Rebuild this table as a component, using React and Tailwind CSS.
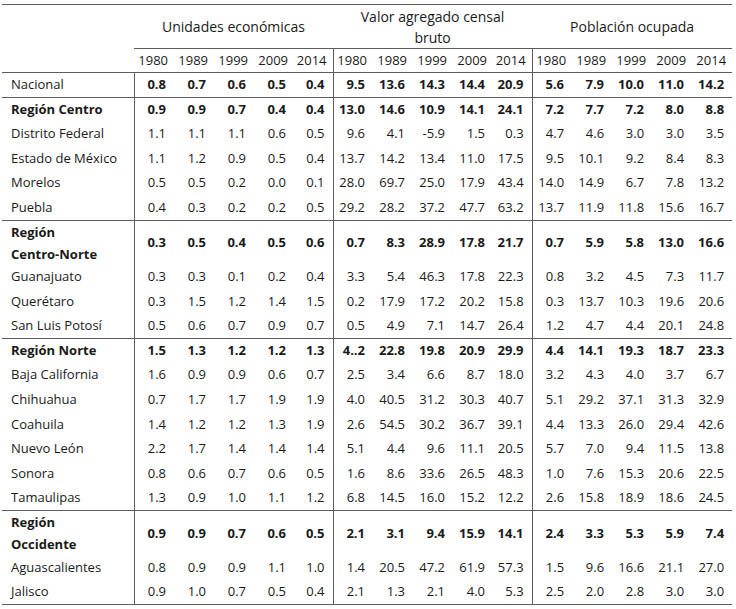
import React from "react";

const rows = [
  { label: "Nacional", bold: false, strong: true, top: true, ue: ["0.8", "0.7", "0.6", "0.5", "0.4"], va: ["9.5", "13.6", "14.3", "14.4", "20.9"], po: ["5.6", "7.9", "10.0", "11.0", "14.2"] },
  { label: "Región Centro", bold: true, top: true, ue: ["0.9", "0.9", "0.7", "0.4", "0.4"], va: ["13.0", "14.6", "10.9", "14.1", "24.1"], po: ["7.2", "7.7", "7.2", "8.0", "8.8"] },
  { label: "Distrito Federal", ue: ["1.1", "1.1", "1.1", "0.6", "0.5"], va: ["9.6", "4.1", "-5.9", "1.5", "0.3"], po: ["4.7", "4.6", "3.0", "3.0", "3.5"] },
  { label: "Estado de México", ue: ["1.1", "1.2", "0.9", "0.5", "0.4"], va: ["13.7", "14.2", "13.4", "11.0", "17.5"], po: ["9.5", "10.1", "9.2", "8.4", "8.3"] },
  { label: "Morelos", ue: ["0.5", "0.5", "0.2", "0.0", "0.1"], va: ["28.0", "69.7", "25.0", "17.9", "43.4"], po: ["14.0", "14.9", "6.7", "7.8", "13.2"] },
  { label: "Puebla", ue: ["0.4", "0.3", "0.2", "0.2", "0.5"], va: ["29.2", "28.2", "37.2", "47.7", "63.2"], po: ["13.7", "11.9", "11.8", "15.6", "16.7"] },
  { label: ["Región", "Centro-Norte"], bold: true, top: true, tall: "h-[43px]", ue: ["0.3", "0.5", "0.4", "0.5", "0.6"], va: ["0.7", "8.3", "28.9", "17.8", "21.7"], po: ["0.7", "5.9", "5.8", "13.0", "16.6"] },
  { label: "Guanajuato", ue: ["0.3", "0.3", "0.1", "0.2", "0.4"], va: ["3.3", "5.4", "46.3", "17.8", "22.3"], po: ["0.8", "3.2", "4.5", "7.3", "11.7"] },
  { label: "Querétaro", ue: ["0.3", "1.5", "1.2", "1.4", "1.5"], va: ["0.2", "17.9", "17.2", "20.2", "15.8"], po: ["0.3", "13.7", "10.3", "19.6", "20.6"] },
  { label: "San Luis Potosí", ue: ["0.5", "0.6", "0.7", "0.9", "0.7"], va: ["0.5", "4.9", "7.1", "14.7", "26.4"], po: ["1.2", "4.7", "4.4", "20.1", "24.8"] },
  { label: "Región Norte", bold: true, top: true, ue: ["1.5", "1.3", "1.2", "1.2", "1.3"], va: ["4..2", "22.8", "19.8", "20.9", "29.9"], po: ["4.4", "14.1", "19.3", "18.7", "23.3"] },
  { label: "Baja California", ue: ["1.6", "0.9", "0.9", "0.6", "0.7"], va: ["2.5", "3.4", "6.6", "8.7", "18.0"], po: ["3.2", "4.3", "4.0", "3.7", "6.7"] },
  { label: "Chihuahua", ue: ["0.7", "1.7", "1.7", "1.9", "1.9"], va: ["4.0", "40.5", "31.2", "30.3", "40.7"], po: ["5.1", "29.2", "37.1", "31.3", "32.9"] },
  { label: "Coahuila", ue: ["1.4", "1.2", "1.2", "1.3", "1.9"], va: ["2.6", "54.5", "30.2", "36.7", "39.1"], po: ["4.4", "13.3", "26.0", "29.4", "42.6"] },
  { label: "Nuevo León", ue: ["2.2", "1.7", "1.4", "1.4", "1.4"], va: ["5.1", "4.4", "9.6", "11.1", "20.5"], po: ["5.7", "7.0", "9.4", "11.5", "13.8"] },
  { label: "Sonora", ue: ["0.8", "0.6", "0.7", "0.6", "0.5"], va: ["1.6", "8.6", "33.6", "26.5", "48.3"], po: ["1.0", "7.6", "15.3", "20.6", "22.5"] },
  { label: "Tamaulipas", ue: ["1.3", "0.9", "1.0", "1.1", "1.2"], va: ["6.8", "14.5", "16.0", "15.2", "12.2"], po: ["2.6", "15.8", "18.9", "18.6", "24.5"] },
  { label: ["Región", "Occidente"], bold: true, top: true, tall: "h-[45px]", ue: ["0.9", "0.9", "0.7", "0.6", "0.5"], va: ["2.1", "3.1", "9.4", "15.9", "14.1"], po: ["2.4", "3.3", "5.3", "5.9", "7.4"] },
  { label: "Aguascalientes", ue: ["0.8", "0.9", "0.9", "1.1", "1.0"], va: ["1.4", "20.5", "47.2", "61.9", "57.3"], po: ["1.5", "9.6", "16.6", "21.1", "27.0"] },
  { label: "Jalisco", ue: ["0.9", "1.0", "0.7", "0.5", "0.4"], va: ["2.1", "1.3", "2.1", "4.0", "5.3"], po: ["2.5", "2.0", "2.8", "3.0", "3.0"] },
];

const years = ["1980", "1989", "1999", "2009", "2014"];

const ValueCells = ({ values, strong, first }) =>
  values.map((v, i) => (
    <td
      key={i}
      className={`text-right pr-[8px] ${strong ? "font-bold" : ""} ${i === 0 && first ? "border-l border-[#5c5c5c]" : ""}`}
    >
      {v}
    </td>
  ));

export default function App() {
  return (
    <div className="w-[736px] h-[609px] bg-white pt-[4px] pl-[2px] font-['Open_Sans',sans-serif] text-[13px] text-[#1a1a1a]">
      <table className="w-[730px] table-fixed border-collapse">
        <colgroup>
          <col className="w-[132px]" />
          {[...Array(15)].map((_, i) => (
            <col key={i} className={i % 5 === 4 && i < 10 ? "w-[39px]" : "w-[40px]"} />
          ))}
        </colgroup>
        <thead>
          <tr className="h-[44px] border-t border-[#5c5c5c] text-[14px]">
            <th rowSpan={2} className="border-b border-[#5c5c5c]"></th>
            <th colSpan={5} className="font-normal text-center border-b border-[#5c5c5c]">
              Unidades económicas
            </th>
            <th colSpan={5} className="font-normal text-center leading-[21px] border-b border-[#5c5c5c]">
              Valor agregado censal
              <br />
              bruto
            </th>
            <th colSpan={5} className="font-normal text-center border-b border-[#5c5c5c]">
              Población ocupada
            </th>
          </tr>
          <tr className="h-[24px] border-b border-[#5c5c5c]">
            {[0, 1, 2].map((g) =>
              years.map((y, i) => (
                <th
                  key={`${g}-${y}`}
                  className={`font-normal text-right pr-[6px] ${i === 0 && g > 0 ? "border-l border-[#5c5c5c]" : ""}`}
                >
                  {y}
                </th>
              ))
            )}
          </tr>
        </thead>
        <tbody>
          {rows.map((r, idx) => {
            const twoLine = Array.isArray(r.label);
            const strong = r.bold || r.strong;
            return (
              <tr
                key={idx}
                className={`${twoLine ? r.tall : "h-[24.6px]"} ${r.top ? "border-t border-[#5c5c5c]" : ""} ${idx === rows.length - 1 ? "border-b border-[#5c5c5c]" : ""}`}
              >
                <td className={`pl-[9px] border-r border-[#5c5c5c] ${r.bold ? "font-bold" : ""} ${twoLine ? "leading-[22px]" : ""}`}>
                  {twoLine ? (
                    <>
                      {r.label[0]}
                      <br />
                      {r.label[1]}
                    </>
                  ) : (
                    r.label
                  )}
                </td>
                <ValueCells values={r.ue} strong={strong} />
                <ValueCells values={r.va} strong={strong} first />
                <ValueCells values={r.po} strong={strong} first />
              </tr>
            );
          })}
        </tbody>
      </table>
    </div>
  );
}
